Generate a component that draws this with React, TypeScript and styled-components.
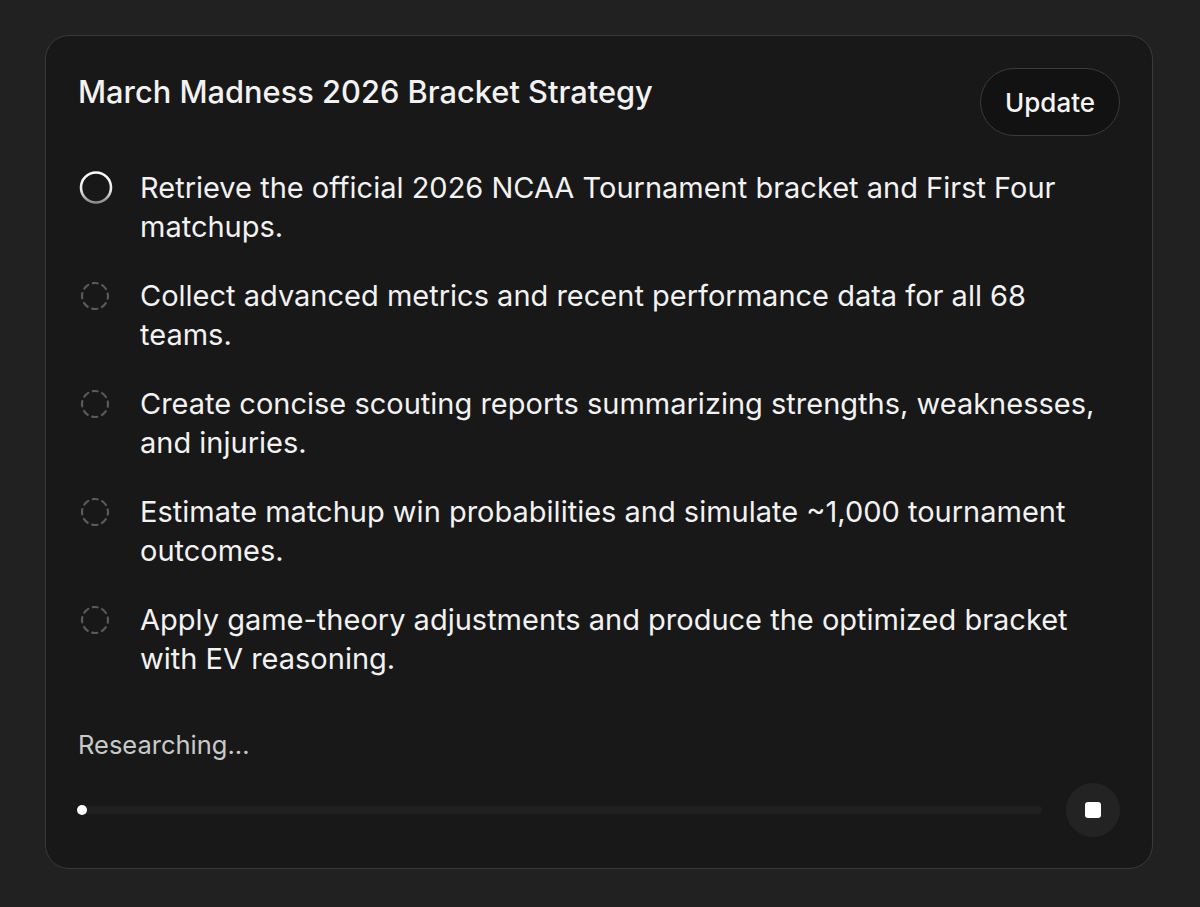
import React from "react";
import styled, { createGlobalStyle } from "styled-components";

const Global = createGlobalStyle`
  html, body { margin: 0; padding: 0; background: #212121; }
  body { font-family: Inter, "Noto Sans", "Liberation Sans", sans-serif; -webkit-font-smoothing: antialiased; }
`;

const Page = styled.div`
  padding: 35px 47px 38px 45px;
  min-height: 907px;
  box-sizing: border-box;
`;

const Card = styled.div`
  box-sizing: border-box;
  width: 1108px;
  height: 834px;
  background: #181818;
  border: 1px solid #3a3a3a;
  border-radius: 24px;
  padding: 32px 32px 31px 32px;
  display: flex;
  flex-direction: column;
`;

const Header = styled.div`
  display: flex;
  justify-content: space-between;
  align-items: flex-start;
`;

const Title = styled.h1`
  margin: 5px 0 0 0;
  font-size: 30.8px;
  line-height: 38px;
  font-weight: 500;
  color: #f2f2f2;
  letter-spacing: 0;
`;

const UpdateButton = styled.button`
  height: 68px;
  width: 140px;
  border-radius: 34px;
  background: #121212;
  border: 1px solid #3a3a3a;
  color: #f4f4f4;
  font-family: inherit;
  font-size: 26px;
  font-weight: 500;
  padding: 0;
`;

const List = styled.ul`
  list-style: none;
  margin: 32px 0 0 0;
  padding: 0;
  display: flex;
  flex-direction: column;
  gap: 30px;
`;

const Item = styled.li`
  display: flex;
  align-items: flex-start;
  gap: 26px;
`;

const IconBox = styled.div`
  width: 36px;
  height: 39px;
  flex: none;
  display: flex;
  align-items: center;
  justify-content: center;
`;

const ItemText = styled.span`
  font-size: 29px;
  line-height: 39px;
  color: #f2f2f2;
  font-weight: 400;
  max-width: 960px;
`;

const Status = styled.div`
  margin-top: 50px;
  font-size: 25.5px;
  line-height: 34px;
  color: #c9c9c9;
`;

const ProgressRow = styled.div`
  margin-top: 21px;
  display: flex;
  align-items: center;
  gap: 24px;
`;

const Track = styled.div`
  position: relative;
  flex: 1;
  height: 8px;
  border-radius: 4px;
  background: #202020;
`;

const Dot = styled.div`
  position: absolute;
  left: -1px;
  top: -1px;
  width: 10px;
  height: 10px;
  border-radius: 50%;
  background: #ffffff;
`;

const StopButton = styled.button`
  width: 54px;
  height: 54px;
  border-radius: 50%;
  border: none;
  background: #232323;
  display: flex;
  align-items: center;
  justify-content: center;
  padding: 0;
  flex: none;
`;

const StopSquare = styled.span`
  width: 16px;
  height: 16px;
  border-radius: 3px;
  background: #ffffff;
`;

const ActiveIcon = () => (
  <svg width="36" height="36" viewBox="0 0 36 36">
    <defs>
      <linearGradient id="ring" x1="0" y1="0" x2="0" y2="1">
        <stop offset="0" stopColor="#ffffff" />
        <stop offset="0.6" stopColor="#e6e6e6" />
        <stop offset="1" stopColor="#8a8a8a" />
      </linearGradient>
    </defs>
    <circle cx="18" cy="17.5" r="15" fill="none" stroke="url(#ring)" strokeWidth="2.6" />
  </svg>
);

const PendingIcon = () => (
  <svg width="36" height="36" viewBox="0 0 36 36">
    <circle
      cx="17"
      cy="18"
      r="13"
      fill="none"
      stroke="#5a5a5a"
      strokeWidth="2.2"
      strokeDasharray="5.4 4.8"
      strokeDashoffset="2.7"
      strokeLinecap="round"
      transform="rotate(-90 17 18)"
    />
  </svg>
);

const steps = [
  "Retrieve the official 2026 NCAA Tournament bracket and First Four matchups.",
  "Collect advanced metrics and recent performance data for all 68 teams.",
  "Create concise scouting reports summarizing strengths, weaknesses, and injuries.",
  "Estimate matchup win probabilities and simulate ~1,000 tournament outcomes.",
  "Apply game-theory adjustments and produce the optimized bracket with EV reasoning.",
];

export default function App() {
  return (
    <>
      <Global />
      <Page>
        <Card>
          <Header>
            <Title>March Madness 2026 Bracket Strategy</Title>
            <UpdateButton>Update</UpdateButton>
          </Header>
          <List>
            {steps.map((s, i) => (
              <Item key={i}>
                <IconBox>{i === 0 ? <ActiveIcon /> : <PendingIcon />}</IconBox>
                <ItemText>{s}</ItemText>
              </Item>
            ))}
          </List>
          <Status>Researching...</Status>
          <ProgressRow>
            <Track>
              <Dot />
            </Track>
            <StopButton>
              <StopSquare />
            </StopButton>
          </ProgressRow>
        </Card>
      </Page>
    </>
  );
}
